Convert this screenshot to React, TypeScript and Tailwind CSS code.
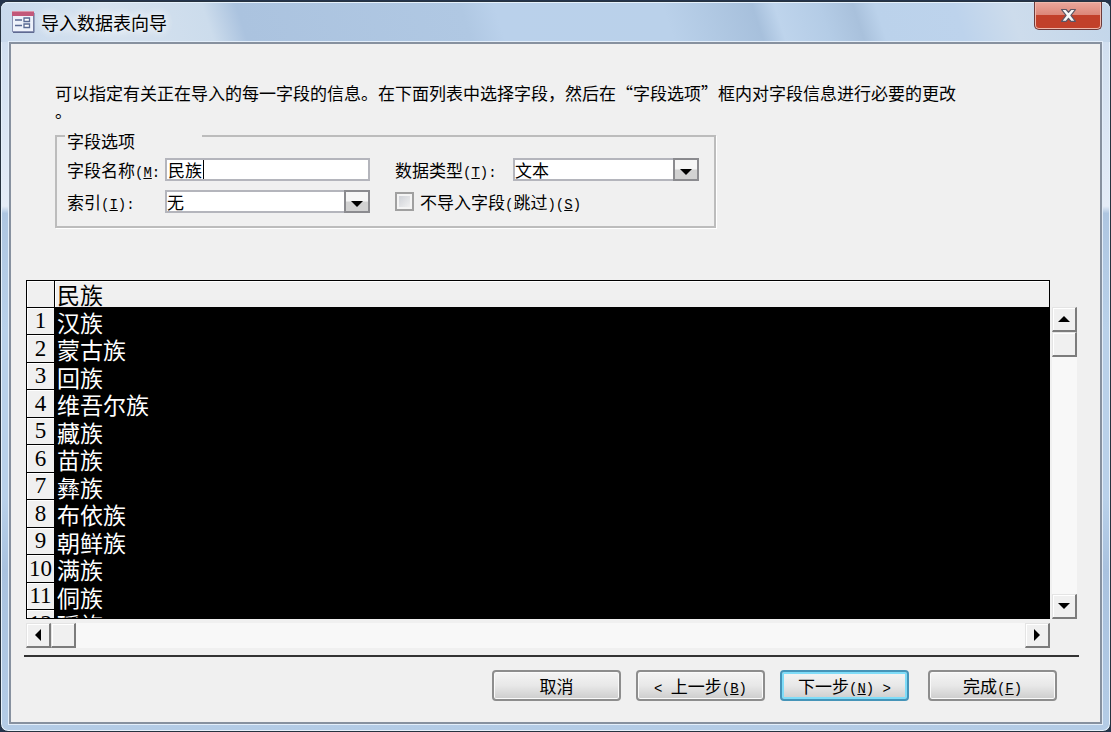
import React, { useState } from 'react';

const rows = ['汉族', '蒙古族', '回族', '维吾尔族', '藏族', '苗族', '彝族', '布依族', '朝鲜族', '满族', '侗族', '瑶族'];

// Half-width characters sit in a fixed pitch next to the Chinese text
const Half = ({ children }: { children: React.ReactNode }) => (
  <span className="font-['Liberation_Mono'] text-[14px] leading-none whitespace-pre">{children}</span>
);

// Underlined shortcut key after a label
const Key = ({ letter }: { letter: string }) => (
  <Half>
    (<span className="underline">{letter}</span>)
  </Half>
);

const FormIcon = () => (
  <svg width="23" height="22" viewBox="0 0 23 22" aria-hidden="true">
    <rect x="0.5" y="0.5" width="21" height="20" fill="#eef2fb" stroke="#8b93b4" />
    <path d="M22 2v19.5H1" fill="none" stroke="#5f6a91" />
    <rect x="0" y="0" width="22" height="5" fill="#c2587a" />
    <path d="M0 0.5h22" stroke="#dc93a8" />
    <path d="M3 9h7M3 14.5h7" stroke="#5a6a94" strokeWidth="1.5" />
    <path d="M12 7h5.5v3.5H12zM12 13h5.5v3.5H12z" fill="#fff" stroke="#5a6a94" strokeWidth="1.3" />
  </svg>
);

const CloseIcon = () => (
  <svg width="17" height="15" viewBox="0 0 17 15" aria-hidden="true">
    <path
      d="M1.5 1.5h4.6l2.4 2.8 2.4-2.8h4.6l-4.6 5.8 4.6 6h-4.6l-2.4-3-2.4 3H1.5l4.6-6z"
      fill="#f8f8f8"
      stroke="#5b5564"
      strokeWidth="1.2"
      strokeLinejoin="round"
    />
  </svg>
);

const arrows = {
  up: 'M6 3L12 9H0z',
  down: 'M0 3H12L6 9z',
  left: 'M3 6L9 0V12z',
  right: 'M9 6L3 0V12z',
};

const Arrow = ({ dir }: { dir: keyof typeof arrows }) => (
  <svg width="12" height="12" viewBox="0 0 12 12" aria-hidden="true">
    <path d={arrows[dir]} fill="#000" />
  </svg>
);

const bevel =
  'flex size-[25px] shrink-0 items-center justify-center border-t border-l border-r-2 border-b-2 border-t-[#e4e4e4] border-l-[#e4e4e4] border-r-[#7c7c7c] border-b-[#7c7c7c] bg-[#f0f0f0] shadow-[inset_1px_1px_0_#fff]';

const Select = ({ id, value, className }: { id: string; value: string; className: string }) => (
  <div className={`relative h-[23px] ${className}`}>
    <select
      id={id}
      defaultValue={value}
      className="block h-full w-full appearance-none border-2 border-[#b4b5bc] bg-white text-[17px] leading-[19px] outline-none"
    >
      <option>{value}</option>
    </select>
    <span className="pointer-events-none absolute inset-y-0 right-0 flex w-[26px] items-center justify-center border-2 border-[#8b8b8f] bg-linear-to-b from-[#f6f6f6] from-45% to-[#d2d2d2] to-55% pt-1">
      <Arrow dir="down" />
    </span>
  </div>
);

const WizardButton = ({ children, primary }: { children: React.ReactNode; primary?: boolean }) => (
  <button
    className={`h-[31px] w-[129px] rounded-[4px] border-2 bg-linear-to-b from-[#f4f4f4] via-[#e8e8e8] via-50% to-[#cdcdcd] text-[17px] leading-[25px] whitespace-pre ${
      primary ? 'border-[#4694b8] shadow-[inset_0_0_0_2px_#7fdcf8]' : 'border-[#8d8d8d] shadow-[inset_0_0_0_1px_#fafafa]'
    }`}
  >
    {children}
  </button>
);

const App = () => {
  const [fieldName, setFieldName] = useState('民族');
  const [skip, setSkip] = useState(false);

  return (
    <div className="flex h-screen bg-[#24344c] pt-px font-['Noto_Sans_CJK_SC',sans-serif] text-[17px] text-black">
      <div className="flex flex-1 flex-col rounded-[8px] border border-[#26323f] bg-linear-[180deg,#ccdcee_0%,#e4ecf7_28%,#aec6e1_29%,#b9d1ea_45%,#b9d1ea_68%,#a9c2df_78%,#b4cce6_100%] px-[8px] pb-[7px] shadow-[inset_0_0_0_1px_#e6f1fb]">
        {/* Title bar */}
        <header className="-mx-[8px] flex h-10 shrink-0 justify-between rounded-t-[7px] bg-linear-[72deg,#c8d9ec_0%,#d6e2ef_10%,#ccdcec_19%,#abc3df_22%,#b0c8e3_42%,#bad1eb_45%,#bad1ea_60%,#a7c0dc_68%,#bed4ec_70%,#b4cce6_74%,#a9c1dc_77%,#bbd2eb_79%,#bdd3ec_86%,#cddcec_91%,#c3d6ea_100%] pr-[8px] pl-[11px] shadow-[inset_0_1px_0_#e6f1fb]">
          <div className="flex items-center gap-[6px]">
            <FormIcon />
            <h1 className="text-[18px] leading-6 [text-shadow:0_0_10px_#fff,0_0_10px_#fff]">导入数据表向导</h1>
          </div>
          <button
            aria-label="关闭"
            className="flex h-7 w-[68px] items-center justify-center rounded-b-[5px] border border-t-0 border-[#6d3a3a] bg-linear-to-b from-[#eba79c] via-[#dc8678] via-48% to-[#c2402a] to-50% shadow-[inset_0_0_0_1px_#f0b8ac]"
          >
            <CloseIcon />
          </button>
        </header>

        <main className="flex min-h-0 flex-1 flex-col border-2 border-[#87919f] bg-[#f0f0f0] pr-[21px] pl-[13px] shadow-[0_0_0_1px_#e3eefa]">
          <p className="mt-[40px] ml-[31px] leading-[18px]">
            可以指定有关正在导入的每一字段的信息。在下面列表中选择字段{'\uFF0C'}然后在“字段选项”框内对字段信息进行必要的更改
            <br />。
          </p>

          {/* Field options */}
          <fieldset className="mt-[11px] ml-[31px] h-[97px] w-[661px] border-2 border-[#bcbcbc] pl-[10px] shadow-[1px_1px_0_#fff]">
            <legend className="-ml-[2px] h-[10px] w-[137px] pl-[2px] leading-[20px]">字段选项</legend>
            <div className="mt-[17px] grid auto-rows-[23px] grid-cols-[98px_230px_auto] gap-y-[9px] leading-[23px]">
              <label htmlFor="name" className="whitespace-nowrap">
                字段名称
                <Half>
                  (<span className="underline">M</span>:
                </Half>
              </label>
              <div className="relative w-[205px]">
                <input
                  id="name"
                  type="text"
                  value={fieldName}
                  onChange={(e) => setFieldName(e.target.value)}
                  className="peer block h-[23px] w-full border-2 border-[#b4b5bc] bg-white pl-px leading-[19px] outline-none"
                />
                <span className="absolute top-[2px] left-[38px] h-[19px] w-px bg-black peer-focus:hidden" />
              </div>
              <div className="flex">
                <label htmlFor="type" className="w-[118px]">
                  数据类型
                  <Key letter="T" />
                  <Half>:</Half>
                </label>
                <Select id="type" value="文本" className="w-[186px]" />
              </div>

              <label htmlFor="index">
                索引
                <Key letter="I" />
                <Half>:</Half>
              </label>
              <Select id="index" value="无" className="w-[205px]" />
              <label className="flex items-center gap-[6px]">
                <input
                  type="checkbox"
                  checked={skip}
                  onChange={(e) => setSkip(e.target.checked)}
                  className="size-[19px] appearance-none border-2 border-[#a0a0a0] bg-linear-135 from-[#c9ccd2] to-[#f6f6f6] shadow-[inset_0_0_0_2px_#f4f4f4] checked:from-[#4a6a94]"
                />
                <span>
                  不导入字段<Half>(</Half>跳过<Half>)</Half>
                  <Key letter="S" />
                </span>
              </label>
            </div>
          </fieldset>

          {/* Preview grid with its scroll bars */}
          <div className="mt-[52px] mr-[2px] ml-[2px] grid min-h-0 flex-1 grid-cols-[1fr_25px] grid-rows-[minmax(0,1fr)_25px] gap-x-[2px] gap-y-[4px]">
            <div className="overflow-hidden border-b border-black bg-black">
              <table className="w-full border-separate border-spacing-0 text-left text-[23px]">
                <thead>
                  <tr className="h-7 bg-[#f0f0f0] leading-[26px]">
                    <th className="w-[29px] border border-black p-0 shadow-[inset_1px_1px_0_#fff]" />
                    <th className="border-y border-r border-black p-0 pl-[2px] font-normal shadow-[inset_1px_1px_0_#fff]">民族</th>
                  </tr>
                </thead>
                <tbody>
                  {rows.map((row, i) => (
                    <tr key={row} className="h-[27px] leading-[26px] even:h-7">
                      <th className="border-x border-b border-black bg-[#f0f0f0] p-0 text-center font-['Liberation_Serif'] font-normal shadow-[inset_1px_1px_0_#fff]">
                        {i + 1}
                      </th>
                      <td className="bg-black p-0 pl-[2px] text-white">{row}</td>
                    </tr>
                  ))}
                </tbody>
              </table>
            </div>

            <div className="mt-[27px] flex flex-col bg-[#f8f8f8]">
              <button aria-label="向上" className={bevel}>
                <Arrow dir="up" />
              </button>
              <div className={bevel} />
              <button aria-label="向下" className={`mt-auto ${bevel}`}>
                <Arrow dir="down" />
              </button>
            </div>

            <div className="flex bg-[#f8f8f8]">
              <button aria-label="向左" className={bevel}>
                <Arrow dir="left" />
              </button>
              <div className={bevel} />
              <button aria-label="向右" className={`ml-auto ${bevel}`}>
                <Arrow dir="right" />
              </button>
            </div>
          </div>

          <hr className="mt-[7px] border-t-2 border-[#333]" />

          <footer className="mt-[13px] mr-[22px] mb-[21px] flex justify-end gap-[19px]">
            <div className="flex gap-[15px]">
              <WizardButton>取消</WizardButton>
              <WizardButton>
                <Half>{'< '}</Half>上一步
                <Key letter="B" />
              </WizardButton>
              <WizardButton primary>
                下一步
                <Key letter="N" />
                <Half>{' >'}</Half>
              </WizardButton>
            </div>
            <WizardButton>
              完成
              <Key letter="F" />
            </WizardButton>
          </footer>
        </main>
      </div>
    </div>
  );
};

export default App;
